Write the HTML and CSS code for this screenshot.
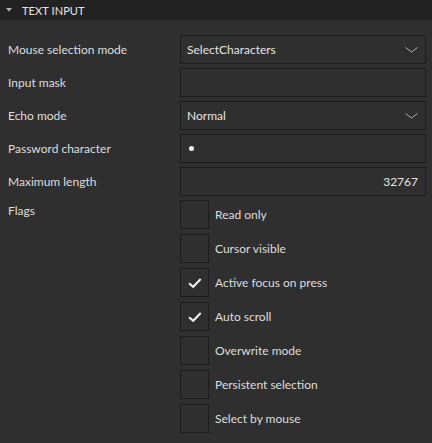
FILE: index.html
```html
<!DOCTYPE html>
<html>
<head>
<meta charset="utf-8">
<link rel="stylesheet" href="styles.css">
</head>
<body>
<div class="panel">
  <div class="header">
    <svg class="caret" width="6" height="4" viewBox="0 0 6 4"><path d="M0 0 L6 0 L3 3.5 Z" fill="#b4b4b4"/></svg>
    <span class="title">TEXT INPUT</span>
  </div>
  <div class="form">
    <div class="label">Mouse selection mode</div>
    <div class="field combo"><span>SelectCharacters</span>
      <svg class="chev" width="13" height="6" viewBox="0 0 13 6"><path d="M0.5 0.5 L6.5 5 L12.5 0.5" fill="none" stroke="#b0b0b0" stroke-width="1"/></svg>
    </div>

    <div class="label">Input mask</div>
    <div class="field"></div>

    <div class="label">Echo mode</div>
    <div class="field combo"><span>Normal</span>
      <svg class="chev" width="13" height="6" viewBox="0 0 13 6"><path d="M0.5 0.5 L6.5 5 L12.5 0.5" fill="none" stroke="#b0b0b0" stroke-width="1"/></svg>
    </div>

    <div class="label">Password character</div>
    <div class="field"><span class="dot"></span></div>

    <div class="label">Maximum length</div>
    <div class="field num"><span>32767</span></div>

    <div class="label flags">Flags</div>
    <div class="checks">
      <div class="check"><div class="box"></div><span>Read only</span></div>
      <div class="check"><div class="box"></div><span>Cursor visible</span></div>
      <div class="check"><div class="box"><svg width="29" height="29" viewBox="0 0 29 29"><path d="M9 15.3 L13.2 18.8 L20.7 11" fill="none" stroke="#f2f2f2" stroke-width="2"/></svg></div><span>Active focus on press</span></div>
      <div class="check"><div class="box"><svg width="29" height="29" viewBox="0 0 29 29"><path d="M9 15.3 L13.2 18.8 L20.7 11" fill="none" stroke="#f2f2f2" stroke-width="2"/></svg></div><span>Auto scroll</span></div>
      <div class="check"><div class="box"></div><span>Overwrite mode</span></div>
      <div class="check"><div class="box"></div><span>Persistent selection</span></div>
      <div class="check"><div class="box"></div><span>Select by mouse</span></div>
    </div>
  </div>
</div>
</body>
</html>
```

FILE: styles.css
```css
html, body {
  margin: 0;
  padding: 0;
  background: #2f2f2f;
  height: 100%;
  overflow: hidden;
}
body {
  font-family: Lato, "Liberation Sans", Arial, sans-serif;
  font-size: 12px;
  color: #dedede;
}
.header {
  height: 20px;
  background: #222222;
  display: flex;
  align-items: center;
}
.caret {
  margin-left: 6px;
  margin-right: 10px;
}
.title {
  font-size: 11px;
  color: #e6e6e6;
  letter-spacing: 0.1px;
}
.form {
  display: grid;
  grid-template-columns: 172px 246px;
  padding: 15px 6px 0 8px;
  row-gap: 4px;
}
.label {
  height: 29px;
  display: flex;
  align-items: center;
}
.label.flags {
  align-items: flex-start;
  padding-top: 3px;
  height: auto;
}
.field {
  height: 29px;
  box-sizing: border-box;
  border: 1px solid #1c1c1c;
  display: flex;
  align-items: center;
  padding: 0 7px 0 6px;
  color: #e4e4e4;
}
.field.combo {
  justify-content: space-between;
}
.field.num {
  justify-content: flex-end;
}
.dot {
  width: 5px;
  height: 5px;
  border-radius: 50%;
  background: #f0f0f0;
  margin-left: 2px;
}
.checks {
  display: flex;
  flex-direction: column;
  gap: 5px;
}
.check {
  display: flex;
  align-items: center;
  height: 29px;
}
.box {
  width: 29px;
  height: 29px;
  box-sizing: border-box;
  border: 1px solid #1c1c1c;
  margin-right: 6px;
  position: relative;
}
.box svg {
  position: absolute;
  left: -1px;
  top: -1px;
}
```
